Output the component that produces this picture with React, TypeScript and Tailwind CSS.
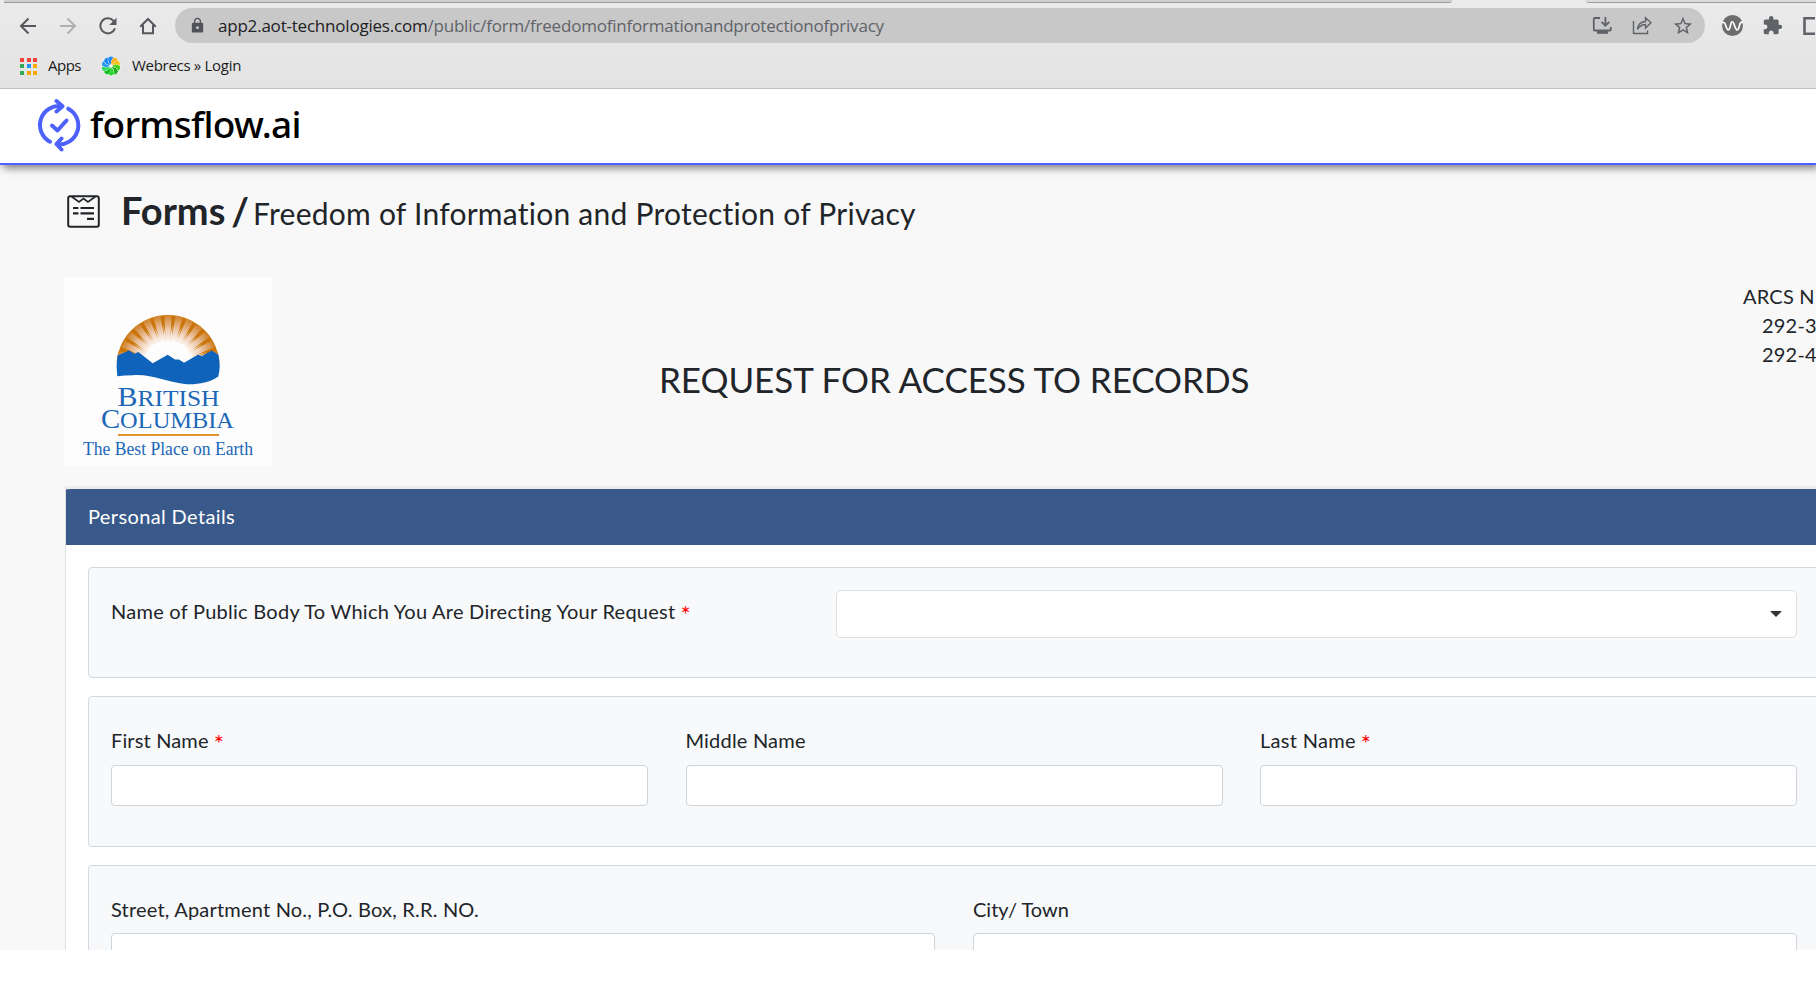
import React from "react";
import { MdLock, MdExtension, MdStarBorder } from "react-icons/md";

const uiFont = "font-['Open_Sans','Noto_Sans',sans-serif]";
const bodyFont = "font-['Lato',sans-serif]";

function Arrow({ flip = false, color }: { flip?: boolean; color: string }) {
  return (
    <svg className={flip ? "size-[18px] rotate-180" : "size-[18px]"} viewBox="0 0 18 18" fill="none" stroke={color} strokeWidth="2">
      <path d="M17 9H2M9.5 1.5 2 9l7.5 7.5" />
    </svg>
  );
}

const appDots = ["#f44336", "#f44336", "#f44336", "#34a853", "#2196f3", "#fbab00", "#34a853", "#fbab00", "#fbab00"];
const petals = ["#1e88f5", "#ffb01f", "#f5c61a", "#3fd21a", "#1fae1f", "#23d62b", "#0fbf1f", "#2bd95a", "#2a9cf0", "#1e88f5"];

function BrowserBar() {
  return (
    <div className={`flex h-[89px] shrink-0 flex-col border-b border-[#c0c0c0] bg-linear-to-b from-[#ebebeb] to-[#e3e3e3] ${uiFont}`}>
      <div className="flex h-[3px] shrink-0 justify-between">
        <div className="ml-1 h-[3px] w-[1448px] rounded-br-[6px] border-b border-[#9d9d9d] bg-[#cfcfcf]" />
        <div className="h-[3px] w-[230px] rounded-bl-[6px] border-b border-[#9d9d9d] bg-[#dcdcdc]" />
      </div>
      <div className="mt-[5px] flex h-[35px] shrink-0 items-center">
        <div className="ml-[19px] flex w-[156px] items-center gap-[22px]">
          <Arrow color="#55585c" />
          <Arrow flip color="#b0b0b0" />
          <svg className="size-[18px]" viewBox="0 0 18 18" fill="none" stroke="#55585c" strokeWidth="2">
            <path d="M16 11.2A7.5 7.5 0 1 1 14.6 4" />
            <path d="M17.5 .8v7.2h-7.2z" fill="#55585c" stroke="none" />
          </svg>
          <svg className="size-[18px]" viewBox="0 0 18 18" fill="none" stroke="#55585c" strokeWidth="2">
            <path d="M1.2 9.8 9 2l7.8 7.8M4 8v8.2h10V8" />
          </svg>
        </div>
        <div className="flex h-[35px] w-[1530px] items-center rounded-full bg-[#c8c8c8] pl-[14px] pr-[11px]">
          <MdLock className="size-[17px] text-[#4f5256]" />
          <div className="ml-[12px] flex-1 whitespace-nowrap text-[17px] leading-[24px] tracking-[-0.21px] text-[#5f6368]">
            <span className="text-[#202124]">app2.aot-technologies.com</span>/public/form/freedomofinformationandprotectionofprivacy
          </div>
          <div className="flex items-center gap-[20px] text-[#5f6368]">
            <svg className="size-[20px]" viewBox="0 0 20 20" fill="none" stroke="currentColor" strokeWidth="1.8">
              <path d="M8 2H2.8Q1.8 2 1.8 3v10.5q0 1 1 1h15q1 0 1-1V11" />
              <path d="M13.4 1v8M9.5 5.8l3.9 3.9 3.9-3.9" />
              <path d="M5 16.3h11" strokeWidth="3" />
            </svg>
            <svg className="size-[20px]" viewBox="0 0 20 20" fill="none" stroke="currentColor" strokeWidth="1.4">
              <path d="M1.500 5v12.500h14V14.500" />
              <path d="M5.500 13.500q.5-7.500 8-8V1.800l5.500 5-5.500 5.200V8.500q-5 0-8 5z" />
            </svg>
            <MdStarBorder className="size-[22px]" />
          </div>
        </div>
        <svg className="ml-[17px] size-[21px] shrink-0" viewBox="0 0 21 21">
          <circle cx="10.5" cy="10.5" r="10.5" fill="#6d6d6d" />
          <path d="M0 7.500q2.500-1 3.500 2.500t2.500 5q1.500 0 2.500-4.500t2-3.500q1 0 2 3.500t2.500 4.500q1.500 0 2.500-4.500t3.500-3" fill="none" stroke="#fff" strokeWidth="1.700" />
        </svg>
        <MdExtension className="ml-[19px] size-[21px] shrink-0 text-[#5f6368]" />
        <svg className="ml-[20px] h-[18px] w-[12px] shrink-0" viewBox="0 0 12 18">
          <path d="M14 1.300H1.500v15.400H14" fill="none" stroke="#5f6368" strokeWidth="2.600" />
        </svg>
      </div>
      <div className="mt-[8px] flex h-[30px] items-center text-[15px] text-[#1b1b1b]">
        <div className="ml-[20px] grid grid-cols-3 gap-[2.500px]">
          {appDots.map((c, i) => (
            <span key={i} className="size-[4px]" style={{ background: c }} />
          ))}
        </div>
        <span className="-mt-[2px] ml-[11px] w-[53px] tracking-[-0.5px]">Apps</span>
        <svg className="size-[20px]" viewBox="-10 -10 20 20">
          <circle r="9.500" fill="#fff" />
          {petals.map((c, i) => (
            <path key={i} d="M0-1.200Q-3.800-3.500-2.600-8.600 .5-10.200 2.400-8.600-.8-5.500 0-1.200z" fill={c} transform={`rotate(${i * 36})`} />
          ))}
        </svg>
        <span className="-mt-[2px] ml-[11px] tracking-[-0.3px]">Webrecs » Login</span>
      </div>
    </div>
  );
}

function FlowLogo() {
  return (
    <svg className="mt-[-2px] h-[54px] w-[44px]" viewBox="0 0 44 54" fill="none" stroke="#4d61fc" strokeWidth="4" strokeLinecap="round" strokeLinejoin="round">
      <path d="M13 43.700A19 19 0 0 1 25 8.200M31.300 10.700A19 19 0 0 1 20 46.300" />
      <path d="M19.500 3 25.500 8.200 19.500 13.500M24.500 40.500 19.500 46l5 5.500" />
      <path d="m15 27.500 5.500 5L29.500 22.500" />
    </svg>
  );
}

function FormIcon() {
  return (
    <svg className="size-[33px] shrink-0" viewBox="0 0 33 33" fill="none" stroke="#212529" strokeWidth="2">
      <rect x="1.200" y="1.200" width="30.600" height="30.600" rx="2" />
      <path d="M4.500 1.500 12 7l4.500-3.500L21 7l7.500-5.500" strokeWidth="1.600" />
      <path d="M6 13h5.500M6 18.300h5.500M13.500 13h13.500M13.500 18.300h13.500M20 23.800h7" strokeWidth="2.200" />
    </svg>
  );
}

function BcLogo() {
  const rays = [-78, -65, -52, -39, -26, -13, 0, 13, 26, 39, 52, 65, 78];
  return (
    <svg className="mt-[1px] h-[189px] w-[208px] shrink-0" viewBox="0 0 208 189">
      <defs>
        <clipPath id="sun"><circle cx="104" cy="89.500" r="51.500" /></clipPath>
        <radialGradient id="ray" gradientUnits="userSpaceOnUse" cx="104" cy="88" r="50">
          <stop offset=".45" stopColor="#fff" />
          <stop offset=".7" stopColor="#efcdb4" />
          <stop offset="1" stopColor="#d0812a" />
        </radialGradient>
      </defs>
      <rect width="208" height="189" fill="#fcfdfc" />
      <g clipPath="url(#sun)">
        <rect x="50" y="36" width="110" height="50" fill="#c97508" />
        {rays.map((r) => (
          <path key={r} d="M101.600 66h4.800l1.200-30h-7.200z" fill="url(#ray)" transform={`rotate(${r} 104 88)`} />
        ))}
        {rays.slice(1).map((r) => (
          <path key={r} d="M102.800 67h2.400L104 47z" fill="#fbeee4" transform={`rotate(${r - 6.5} 104 88)`} />
        ))}
        <ellipse cx="104" cy="88" rx="25" ry="24.500" fill="#fcfdfc" />
      </g>
      <path d="M53.500 78.500 65 73.500l5.300 3.300 4-1.800L88.700 86.200l15-8.400 7.300 4.700h4l5 3.300 14.300-8.300 3.400 1.700 10-5.700 6.600 4.300q2.800 11 0 21.700c-9 6.500-20 8-31.600 7.700-20-1.500-33-10-53.400-9q-9 0-16 1-1.500-10 .2-20.700z" fill="#0f63ba" />
      <g fill="#1b67b8" className="font-['Liberation_Serif',serif]">
        <text x="53.500" y="129" fontSize="27" textLength="102" lengthAdjust="spacingAndGlyphs">B<tspan fontSize="23">RITISH</tspan></text>
        <text x="37" y="151" fontSize="27" textLength="133" lengthAdjust="spacingAndGlyphs">C<tspan fontSize="23">OLUMBIA</tspan></text>
        <text x="19" y="177.500" fontSize="19" textLength="170" lengthAdjust="spacingAndGlyphs">The Best Place on Earth</text>
      </g>
      <path d="M54 158h101" stroke="#e0952f" strokeWidth="1.800" />
    </svg>
  );
}

function Label({ children, required = false, className = "" }: { children: React.ReactNode; required?: boolean; className?: string }) {
  return (
    <label className={`block h-[29px] whitespace-nowrap text-[20px] leading-[29px] ${className}`}>
      {children}
      {required && <span className="ml-[5px] align-[-4px] text-[24px] leading-none text-[#ff0000]">*</span>}
    </label>
  );
}

function Field({ label, required, spacing }: { label: string; required?: boolean; spacing: string }) {
  return (
    <div>
      <Label required={required} className={spacing}>{label}</Label>
      <input className="mt-[10px] block h-[41px] w-full rounded-[4px] border border-[#ced4da] bg-white" />
    </div>
  );
}

const well = "w-[1800px] rounded-[4px] border border-[#d5d9dd] bg-[#f8f9fb] pl-[22px]";

export default function App() {
  return (
    <div className="h-[990px] w-[1816px] overflow-hidden bg-white">
      <div className="flex h-[950px] flex-col overflow-hidden bg-[#f8f8f8]">
        <BrowserBar />
        <header className="flex h-[76px] shrink-0 items-center border-b-2 border-[#4d61fc] bg-white pl-[37px] shadow-[3px_3px_8px_rgba(0,0,0,0.5)] [clip-path:inset(0_0_-16px_0)]">
          <FlowLogo />
          <span className="ml-[9px] mt-[-5px] font-['Noto_Sans',sans-serif] text-[37px] font-medium leading-[50px] tracking-[-0.7px] text-black">formsflow.ai</span>
        </header>
        <main className={`flex flex-col text-[#212529] [font-variant-ligatures:none] ${bodyFont}`}>
          <div className="ml-[67px] flex h-[111px] items-start pt-[21px]">
            <div className="pt-[9px]"><FormIcon /></div>
            <h1 className="ml-[21px] flex items-baseline whitespace-nowrap text-[38px] font-bold leading-[48px]">
              <span>Forms</span>
              <span className="ml-[6px]">/</span>
              <span className="ml-[4px] text-[30px] font-normal tracking-[0.25px]">Freedom of Information and Protection of Privacy</span>
            </h1>
          </div>
          <div className="ml-[64px] flex h-[210px]">
            <BcLogo />
            <h2 className="ml-[387px] mt-[82px] w-[1084px] shrink-0 whitespace-nowrap text-[35px] leading-[42px] tracking-[-0.07px]">REQUEST FOR ACCESS TO RECORDS</h2>
            <div className="mt-[6px] shrink-0 whitespace-nowrap text-[20px] leading-[29px] tracking-[0.2px]">
              <div>ARCS N</div>
              <div className="pl-[19px]">292-3</div>
              <div className="pl-[19px]">292-4</div>
            </div>
          </div>
          <section className="ml-[65px] w-[1860px] border-l border-[#dcdee0] bg-white">
            <div className="flex h-[59px] items-center rounded-tl-[4px] border-t-[3px] border-[#ececed] bg-[#385989] pb-[3px] pl-[22px] text-[20px] tracking-[0.38px] text-white">Personal Details</div>
            <div className="flex flex-col gap-[18px] pl-[22px] pt-[22px]">
              <div className={`flex h-[111px] pt-[22px] ${well}`}>
                <Label required className="mt-[7px] w-[725px] tracking-[0.26px]">Name of Public Body To Which You Are Directing Your Request</Label>
                <div className="flex h-[48px] w-[961px] shrink-0 items-center justify-end rounded-[5px] border border-[#dddfe1] bg-white pr-[14px]">
                  <svg className="h-[6px] w-[12px]" viewBox="0 0 12 6"><path d="M0 0h12L6 6z" fill="#333" /></svg>
                </div>
              </div>
              <div className={`h-[151px] pt-[29px] ${well}`}>
                <div className="grid w-[1686px] grid-cols-3 gap-[37.5px]">
                  <Field label="First Name" required spacing="tracking-[0.15px]" />
                  <Field label="Middle Name" spacing="tracking-[0.2px]" />
                  <Field label="Last Name" required spacing="tracking-[0.3px]" />
                </div>
              </div>
              <div className={`h-[151px] pt-[29px] ${well}`}>
                <div className="grid w-[1686px] grid-cols-2 gap-[38px]">
                  <Field label="Street, Apartment No., P.O. Box, R.R. NO." spacing="mb-[-1px] tracking-[0.2px]" />
                  <Field label="City/ Town" spacing="mb-[-1px]" />
                </div>
              </div>
            </div>
          </section>
        </main>
      </div>
    </div>
  );
}
